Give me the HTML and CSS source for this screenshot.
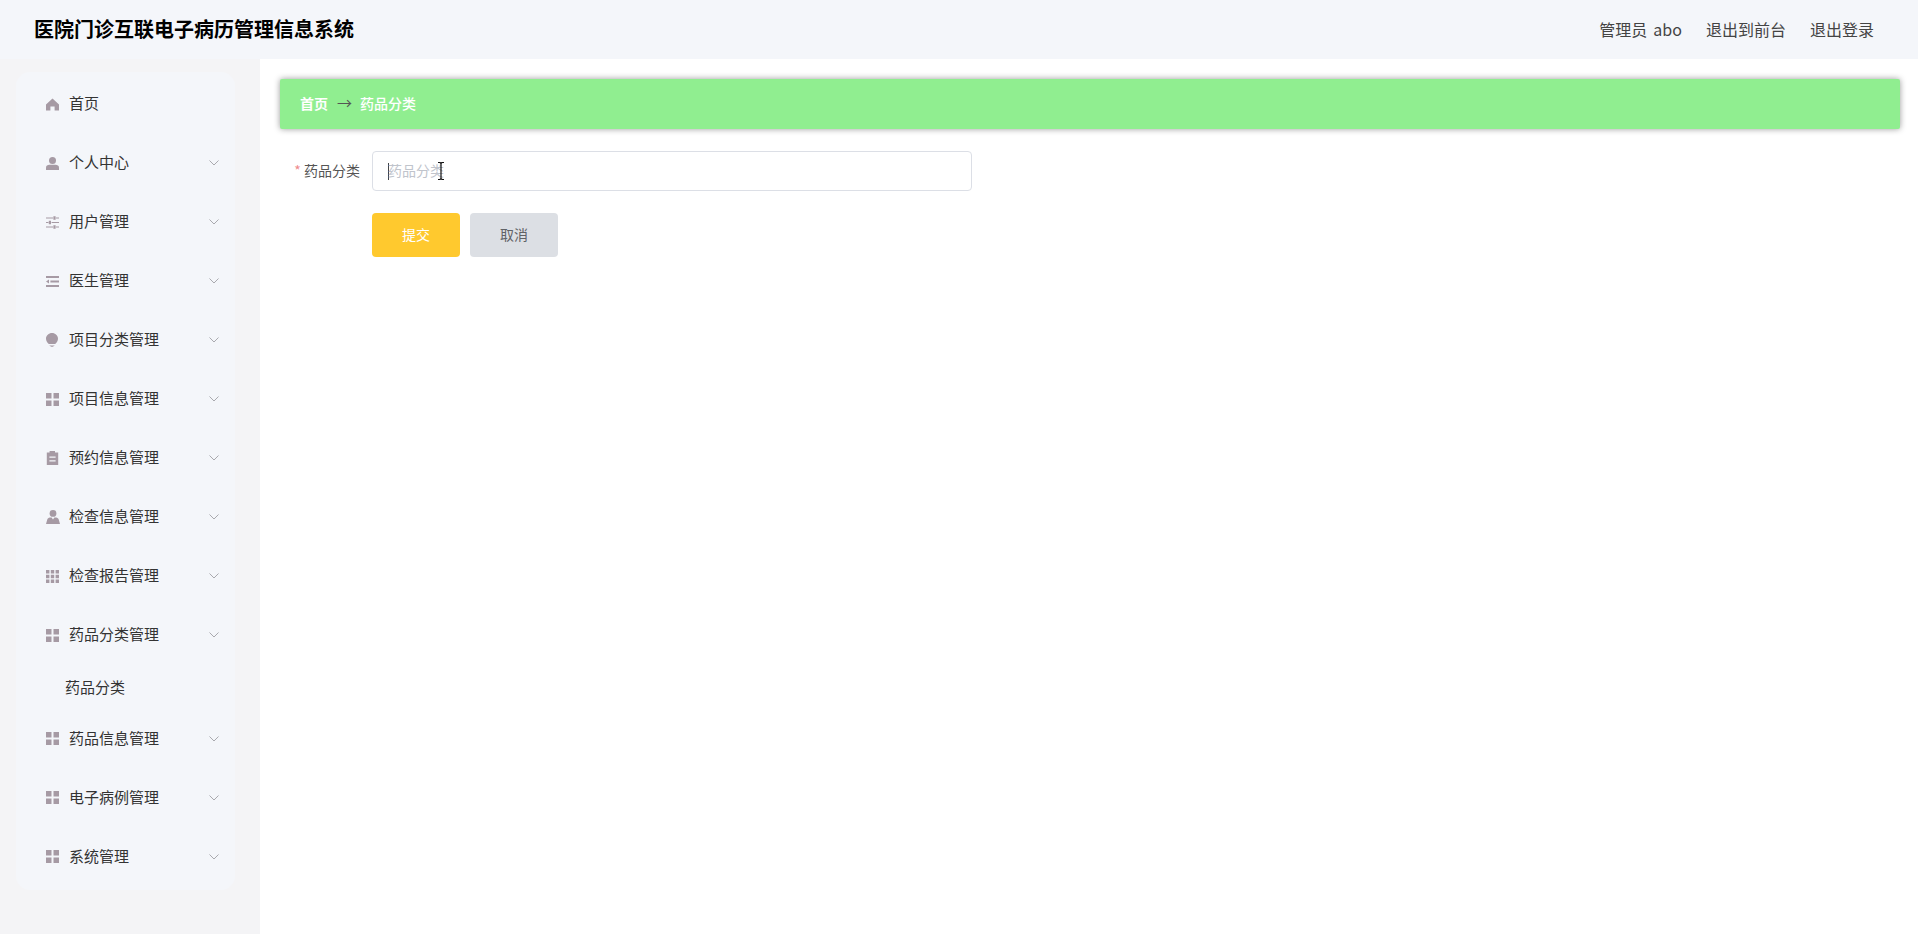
FILE: index.html
```html
<!DOCTYPE html>
<html lang="zh-CN">
<head>
<meta charset="utf-8">
<title>医院门诊互联电子病历管理信息系统</title>
<link rel="stylesheet" href="styles.css">
</head>
<body>
<svg class="defs" width="0" height="0" aria-hidden="true">
  <symbol id="i-home" viewBox="0 0 13 13"><path d="M6.5 .6 13 6.4V12.6H8.6V8.4H4.4V12.6H0V6.4Z"/></symbol>
  <symbol id="i-user" viewBox="0 0 13 13"><circle cx="6.5" cy="3.5" r="3.5"/><path d="M0 13V10.6C0 8.6 1.6 7.8 3.4 7.8H9.6C11.4 7.8 13 8.6 13 10.6V13Z"/></symbol>
  <symbol id="i-ops" viewBox="0 0 13 13"><path d="M0 1.4H7V2.6H0ZM10 1.4H13V2.6H10ZM7.4 .3H9.6V3.7H7.4ZM0 5.9H2.4V7.1H0ZM5.6 5.9H13V7.1H5.6ZM2.8 4.8H5V8.2H2.8ZM0 10.4H7V11.6H0ZM10 10.4H13V11.6H10ZM7.4 9.3H9.6V12.7H7.4Z"/></symbol>
  <symbol id="i-fold" viewBox="0 0 13 13"><path d="M0 1H13V3H0ZM4.4 5.5H13V7.5H4.4ZM0 10H13V12H0ZM0 6.5 3 4.4V8.6Z"/></symbol>
  <symbol id="i-bulb" viewBox="0 0 13 14"><path d="M6 0C9.2 0 12 2.5 12 5.7 12 8 10.6 9.6 9.2 11H2.8C1.4 9.6 0 8 0 5.7 0 2.5 2.8 0 6 0ZM3.6 11.9H8.4V12.6H3.6ZM4.6 13.2H7.4V14H4.6Z"/></symbol>
  <symbol id="i-menu" viewBox="0 0 13 13"><path d="M0 0H5.5V5.5H0ZM7.5 0H13V5.5H7.5ZM0 7.5H5.5V13H0ZM7.5 7.5H13V13H7.5Z"/></symbol>
  <symbol id="i-order" viewBox="0 0 13 14"><path fill-rule="evenodd" d="M3.6 0H9V1.6H12.2V14H.8V1.6H3.6ZM3.4 5.6V6.8H9.6V5.6ZM3.4 9.2V10.4H9.6V9.2Z"/></symbol>
  <symbol id="i-custom" viewBox="0 0 14 14"><circle cx="7" cy="3.4" r="3.4"/><path d="M0 14 1.2 9.8C1.6 8.6 2.6 7.6 3.8 7.6H5.6L7 9.6 8.4 7.6H10.2C11.4 7.6 12.4 8.6 12.8 9.8L14 14Z"/></symbol>
  <symbol id="i-grid" viewBox="0 0 13 13"><path d="M0 0H3.4V3.4H0ZM4.8 0H8.2V3.4H4.8ZM9.6 0H13V3.4H9.6ZM0 4.8H3.4V8.2H0ZM4.8 4.8H8.2V8.2H4.8ZM9.6 4.8H13V8.2H9.6ZM0 9.6H3.4V13H0ZM4.8 9.6H8.2V13H4.8ZM9.6 9.6H13V13H9.6Z"/></symbol>
  <symbol id="i-chev" viewBox="0 0 10 6"><path d="M.5 .5 5 5 9.5 .5" fill="none" stroke="currentColor" stroke-width="1"/></symbol>
</svg>

<header class="topbar">
  <h1 class="brand">医院门诊互联电子病历管理信息系统</h1>
  <nav class="topnav">
    <span class="topnav-item topnav-user">管理员 abo</span>
    <a class="topnav-item">退出到前台</a>
    <a class="topnav-item">退出登录</a>
  </nav>
</header>

<div class="layout">
  <aside class="sidebar">
    <ul class="menu">
      <li class="menu-item"><svg class="ico"><use href="#i-home"/></svg><span class="menu-label">首页</span></li>
      <li class="menu-item"><svg class="ico"><use href="#i-user"/></svg><span class="menu-label">个人中心</span><svg class="chev"><use href="#i-chev"/></svg></li>
      <li class="menu-item"><svg class="ico"><use href="#i-ops"/></svg><span class="menu-label">用户管理</span><svg class="chev"><use href="#i-chev"/></svg></li>
      <li class="menu-item"><svg class="ico"><use href="#i-fold"/></svg><span class="menu-label">医生管理</span><svg class="chev"><use href="#i-chev"/></svg></li>
      <li class="menu-item"><svg class="ico ico-tall"><use href="#i-bulb"/></svg><span class="menu-label">项目分类管理</span><svg class="chev"><use href="#i-chev"/></svg></li>
      <li class="menu-item"><svg class="ico"><use href="#i-menu"/></svg><span class="menu-label">项目信息管理</span><svg class="chev"><use href="#i-chev"/></svg></li>
      <li class="menu-item"><svg class="ico ico-tall"><use href="#i-order"/></svg><span class="menu-label">预约信息管理</span><svg class="chev"><use href="#i-chev"/></svg></li>
      <li class="menu-item"><svg class="ico ico-wide"><use href="#i-custom"/></svg><span class="menu-label">检查信息管理</span><svg class="chev"><use href="#i-chev"/></svg></li>
      <li class="menu-item"><svg class="ico"><use href="#i-grid"/></svg><span class="menu-label">检查报告管理</span><svg class="chev"><use href="#i-chev"/></svg></li>
      <li class="menu-item"><svg class="ico"><use href="#i-menu"/></svg><span class="menu-label">药品分类管理</span><svg class="chev"><use href="#i-chev"/></svg></li>
      <li class="menu-sub">药品分类</li>
      <li class="menu-item"><svg class="ico"><use href="#i-menu"/></svg><span class="menu-label">药品信息管理</span><svg class="chev"><use href="#i-chev"/></svg></li>
      <li class="menu-item"><svg class="ico"><use href="#i-menu"/></svg><span class="menu-label">电子病例管理</span><svg class="chev"><use href="#i-chev"/></svg></li>
      <li class="menu-item"><svg class="ico"><use href="#i-menu"/></svg><span class="menu-label">系统管理</span><svg class="chev"><use href="#i-chev"/></svg></li>
    </ul>
  </aside>

  <main class="content">
    <div class="crumb">
      <span class="crumb-link crumb-home">首页</span>
      <span class="crumb-sep">→</span>
      <span class="crumb-link">药品分类</span>
    </div>
    <form class="form">
      <div class="form-row">
        <label class="form-label"><span class="req">*</span> 药品分类</label>
        <div class="field">
          <span class="caret"></span>
          <span class="placeholder">药品分类</span>
          <svg class="ibeam" viewBox="0 0 8 18"><path d="M1 .5H3L4 1.5 5 .5H7M4 1.5V16.5M1 17.5H3L4 16.5 5 17.5H7" fill="none" stroke="#111" stroke-width="1.2"/></svg>
        </div>
      </div>
      <div class="actions">
        <button type="button" class="btn btn-ok">提交</button>
        <button type="button" class="btn btn-no">取消</button>
      </div>
    </form>
  </main>
</div>
</body>
</html>
```
FILE: styles.css
```css
* { box-sizing: border-box; }
html, body { margin: 0; height: 100%; overflow: hidden; }
body {
  background: #fff;
  color: #303133;
  font-family: "Noto Sans CJK SC", "Open Sans", sans-serif;
  font-size: 14px;
}
.defs { position: absolute; }

.topbar {
  height: 59px;
  background: #f4f6fa;
  display: flex;
  align-items: center;
  justify-content: space-between;
  padding: 0 44px 0 34px;
}
.brand { margin: 0 0 1px; font-size: 20px; font-weight: 700; color: #000; line-height: 1; }
.topnav { display: flex; gap: 24px; padding-bottom: 2px; }
.topnav-item { font-size: 16px; color: #444; line-height: 1; }
.topnav-user { word-spacing: 2.5px; }

.layout { display: flex; height: 875px; }
.sidebar {
  width: 260px;
  flex: none;
  background: #f4f4f6;
  padding: 13px 25px 0 16px;
}
.menu {
  list-style: none;
  margin: 0;
  padding: 2.5px 0 0;
  height: 818px;
  background: #f4f6fa;
  border-radius: 14px;
}
.menu-item {
  height: 59px;
  padding-left: 30px;
  padding-right: 16px;
  display: flex;
  align-items: center;
  font-size: 15px;
  color: #333;
}
.ico { width: 13px; height: 13px; fill: #a69aa4; margin-right: 10px; flex: none; }
.ico-tall { height: 14px; }
.ico-wide { width: 14px; height: 14px; margin-left: -.5px; margin-right: 9.5px; }
.menu-label { flex: 1; line-height: 1; padding-bottom: 3px; }
.chev { width: 10px; height: 6px; color: #a9a9ae; flex: none; }
.menu-sub {
  height: 44.5px;
  padding-left: 49px;
  display: flex;
  align-items: center;
  font-size: 15px;
  color: #333;
}

.content { flex: 1; padding: 20px 18px 0 20px; }
.crumb {
  height: 50px;
  background: #90ee90;
  border-radius: 2px;
  box-shadow: 0 0 6px rgba(0, 0, 0, .4);
  padding: 0 0 3px 20px;
  display: flex;
  align-items: center;
}
.crumb-link { color: #fff; font-size: 14px; font-weight: 500; line-height: 1; }
.crumb-home { font-weight: 700; }
.crumb-sep { margin: 0 8px 0 9px; font-size: 15px; color: #555; line-height: 1; }

.form { padding-top: 22px; }
.form-row { display: flex; align-items: center; height: 40px; }
.form-label { width: 92px; padding: 0 12px 2px 0; text-align: right; font-size: 14px; color: #555; line-height: 1; }
.req { color: #ef8c8c; }
.field {
  width: 600px;
  height: 40px;
  position: relative;
  border: 1px solid #dcdfe6;
  border-radius: 4px;
  background: #fff;
  display: flex;
  align-items: center;
  padding-left: 15px;
}
.caret { width: 1px; height: 17px; background: #444; margin-right: -1px; }
.placeholder { font-size: 14px; color: #c0c4cc; line-height: 1; padding-bottom: 2px; }
.ibeam { position: absolute; left: 64px; top: 10px; width: 8px; height: 18px; }

.actions { display: flex; gap: 10px; margin: 22px 0 0 92px; }
.btn {
  width: 88px;
  height: 44px;
  border: 0;
  border-radius: 4px;
  font: inherit;
  font-size: 14px;
  line-height: 1;
  padding: 0 0 2px;
}
.btn-ok { background: #ffc92e; color: #fff; }
.btn-no { background: #dcdfe4; color: #606266; }
```
